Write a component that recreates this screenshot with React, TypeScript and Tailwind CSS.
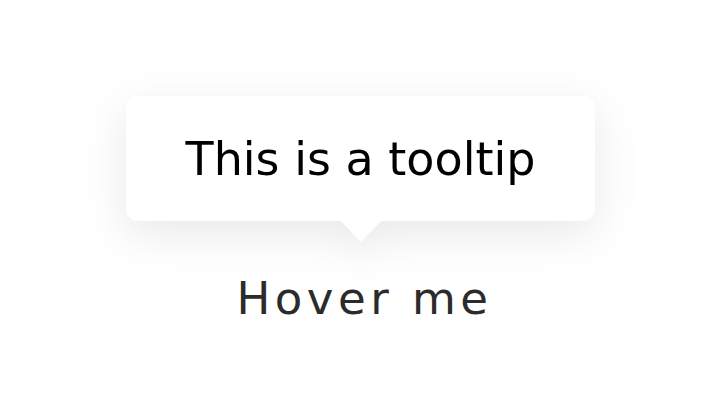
export default function App() {
  return (
    <div className="flex h-[415px] w-[725px] flex-col items-center bg-white pt-[96px] font-['DejaVu_Sans',sans-serif]">
      {/* tooltip bubble with its arrow */}
      <div className="ml-[-4px] flex flex-col items-center drop-shadow-[0_12px_22px_rgba(0,0,0,0.09)]">
        <div className="flex h-[125px] w-[469px] items-center justify-center rounded-[12px] bg-white">
          <span className="text-[46px] leading-none text-black">This is a tooltip</span>
        </div>
        <div className="h-0 w-0 border-x-[20px] border-t-[21px] border-x-transparent border-t-white" />
      </div>
      <div className="mt-[34px] pl-[4px] text-[45px] leading-none tracking-[4.5px] text-[#2b2b2b]">Hover me</div>
    </div>
  );
}
